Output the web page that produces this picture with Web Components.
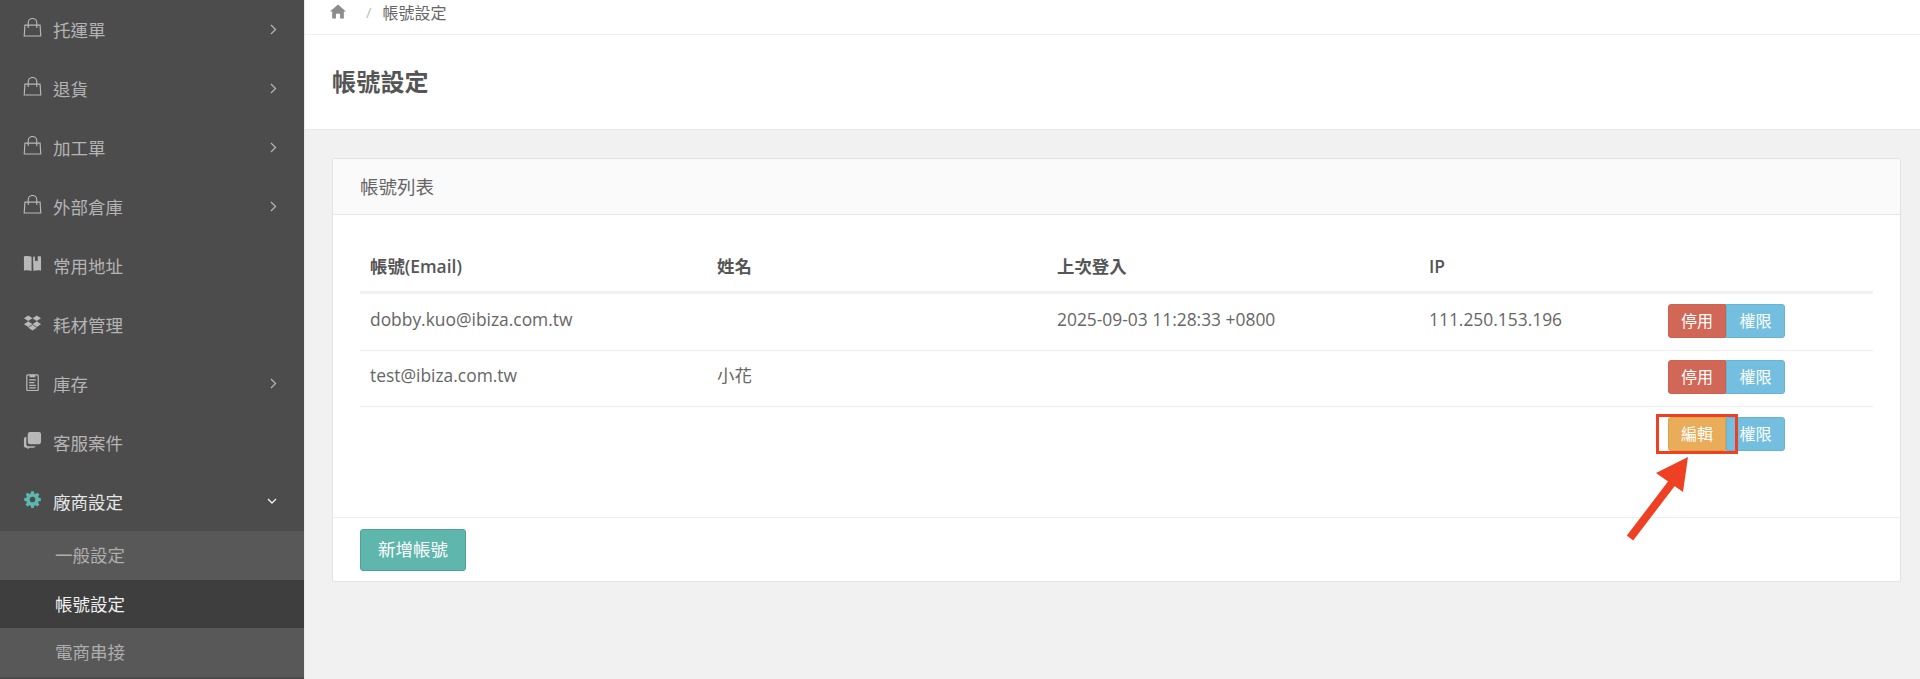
<!DOCTYPE html>
<html lang="zh-Hant"><head><meta charset="utf-8"><title>帳號設定</title>
<style>
html,body{margin:0;height:100%;overflow:hidden;background:#f1f1f1}
body{font:16px/1.4 "Open Sans","Noto Sans CJK TC",sans-serif;color:#555}
</style></head><body>
<app-shell>
  <side-nav slot="side">
    <nav-item icon="bag" arrow="right">托運單</nav-item>
    <nav-item icon="bag" arrow="right">退貨</nav-item>
    <nav-item icon="bag" arrow="right">加工單</nav-item>
    <nav-item icon="bag" arrow="right">外部倉庫</nav-item>
    <nav-item icon="book">常用地址</nav-item>
    <nav-item icon="dropbox">耗材管理</nav-item>
    <nav-item icon="clip" arrow="right">庫存</nav-item>
    <nav-item icon="chat">客服案件</nav-item>
    <nav-item icon="gear" arrow="down" open>廠商設定</nav-item>
    <sub-item>一般設定</sub-item>
    <sub-item active>帳號設定</sub-item>
    <sub-item>電商串接</sub-item>
  </side-nav>
  <bread-crumb>帳號設定</bread-crumb>
  <page-head>帳號設定</page-head>
  <account-card title-text="帳號列表">
    <account-table></account-table>
    <x-btn slot="footer" kind="add">新增帳號</x-btn>
  </account-card>
</app-shell>
<script>
const ICONS={
bag:'<path d="M2 7.500h16l.7 11.500H1.300z" fill="none" stroke="currentColor" stroke-width="1.200"/><path d="M5.500 10.500V5a4.500 4.500 0 0 1 9 0v5.500" fill="none" stroke="currentColor" stroke-width="1.200"/>',
book:'<path d="M1 2.500c2.500-.5 5.500-.5 8 .5v15c-2.500-1-5.500-1-8-.5zM10.500 3c.6-.2 1.300-.4 2-.5v5.500l1.500-1.200 1.500 1.200V2.300c1.200 0 2.300 0 3.500.2v15c-2.500-.5-5.500-.5-8 .5z" fill="currentColor"/>',
dropbox:'<path d="M5.500 2.500 10 5.500 5.500 8.500 1 5.500zM14.500 2.500 19 5.500 14.500 8.500 10 5.500zM5.500 8.800 10 11.800 5.500 14.800 1 11.800zM14.500 8.800 19 11.800 14.500 14.800 10 11.800zM5.500 15.600 10 12.700 14.500 15.600 10 18.500z" fill="currentColor"/>',
clip:'<path d="M5 3h10a1 1 0 0 1 1 1v14.500a1 1 0 0 1-1 1H5a1 1 0 0 1-1-1V4a1 1 0 0 1 1-1z M6.500 8.300h7M6.500 11.200h5.500M6.500 14h7M6.500 16.800h7" fill="none" stroke="currentColor" stroke-width="1.300"/><path d="M7 5.500V3h2a1.100 1.100 0 0 1 2 0h2v2.500z" fill="currentColor"/>',
chat:'<path d="M7.500 1h9.500a2.500 2.500 0 0 1 2 2v8a3 3 0 0 1-3 3H7.500A2.500 2.500 0 0 1 5 11.500v-8A2.500 2.500 0 0 1 7.500 1z" fill="currentColor"/><path d="M3.500 6v8.500a2 2 0 0 0 2 1.500h8l-2 1.500H7l-2.500 1.800.3-1.800H3a2 2 0 0 1-2-2V8.500A2.500 2.500 0 0 1 3.500 6z" fill="currentColor"/>',
gear:'<path transform="translate(1.300 1.300) scale(.87)" fill-rule="evenodd" d="M8.400 0h3.200l.5 2.600 1.700.7 2.200-1.500 2.300 2.300-1.500 2.200.7 1.700 2.600.5v3.200l-2.600.5-.7 1.700 1.500 2.200-2.300 2.300-2.200-1.500-1.700.7-.5 2.600H8.400l-.5-2.600-1.700-.7-2.200 1.500-2.300-2.300 1.500-2.200-.7-1.700L-.1 11.600V8.400l2.600-.5.7-1.700-1.500-2.200 2.300-2.300 2.200 1.500 1.700-.7zM10 6.600a3.400 3.400 0 1 0 0 6.800 3.400 3.400 0 0 0 0-6.800z" fill="currentColor"/>'
};
function def(name,css,html){
  customElements.define(name,class extends HTMLElement{
    connectedCallback(){
      if(this.shadowRoot)return;
      const r=this.attachShadow({mode:'open'});
      r.innerHTML='<style>'+css+'</style>'+html;
    }
  });
}
def('app-shell',`
:host{display:grid;grid-template-columns:304px 1fr;height:679px;overflow:hidden}
.side{grid-row:1;min-height:0}
.main{display:flex;flex-direction:column;min-width:0;border-left:1px solid #e8e8e8;background:#f1f1f1}
`,`<div class="side"><slot name="side"></slot></div><div class="main"><slot></slot></div>`);
def('side-nav',`:host{display:flex;flex-direction:column;height:679px;background:#4c4c4c;box-sizing:border-box;overflow:hidden}`,`<slot></slot>`);
customElements.define('nav-item',class extends HTMLElement{
  connectedCallback(){
    if(this.shadowRoot)return;
    const r=this.attachShadow({mode:'open'});
    const ic=this.getAttribute('icon'),ar=this.getAttribute('arrow'),open=this.hasAttribute('open');
    const arrow=ar==='right'?'<svg class="ar" width="7" height="11" viewBox="0 0 7 11"><path d="M1 1l4.500 4.500L1 10" fill="none" stroke="#b4b4b4" stroke-width="1.300"/></svg>':ar==='down'?'<svg class="ar" width="10" height="7" viewBox="0 0 10 7"><path d="M1 1l4 4 4-4" fill="none" stroke="#eee" stroke-width="1.400"/></svg>':'';
    r.innerHTML=`<style>
:host{display:flex;align-items:center;flex:none;height:59px;padding:0 27px 0 23px;box-sizing:border-box;color:${open?'#e6e6e6':'#b4b4b4'};font-size:17.500px}
svg.i{width:19px;height:19px;flex:none;margin-right:11px;margin-top:-4px;color:${ic==='gear'?'#5cb8ae':'#b8b8b8'}}
.t{flex:1;line-height:1;padding-top:2px}
</style><svg class="i" viewBox="0 0 20 20">${ICONS[ic]}</svg><span class="t"><slot></slot></span>${arrow}`;
  }
});
customElements.define('sub-item',class extends HTMLElement{
  connectedCallback(){
    if(this.shadowRoot)return;
    const r=this.attachShadow({mode:'open'});
    const a=this.hasAttribute('active');
    r.innerHTML=`<style>:host{display:flex;align-items:center;flex:none;height:48.500px;padding-left:55px;box-sizing:border-box;background:${a?'#3e3e3e':'#585858'};color:${a?'#f0f0f0':'#adadad'};font-size:17.500px}</style><slot></slot>`;
  }
});
def('bread-crumb',`
:host{display:flex;align-items:center;flex:none;background:#fff;border-bottom:1px solid #eee;padding:0 0 0 25px;height:34px;font-size:16px;color:#666;line-height:1}
svg{width:16px;height:16px;color:#8c8c8c;margin-top:-12px}
.sep{color:#bbb;margin:-10px 11px 0 20px;font-size:15px}
span.t{margin-top:-8px}
`,`<svg viewBox="0 0 17 16"><path d="M8.500 1 17 8.500h-2.300V16h-4v-5H6.300v5h-4V8.500H0z" fill="currentColor"/></svg><span class="sep">/</span><span class="t"><slot></slot></span>`);
def('page-head',`
:host{display:flex;align-items:center;flex:none;height:94px;background:#fff;border-bottom:1px solid #e9e9e9;padding-left:27px;font-size:24px;font-weight:700;color:#555;letter-spacing:.2px}
`,`<slot></slot>`);
customElements.define('account-card',class extends HTMLElement{
  connectedCallback(){
    if(this.shadowRoot)return;
    const r=this.attachShadow({mode:'open'});
    r.innerHTML=`<style>
:host{display:block;margin:28px 19px 0 27px;background:#fff;border:1px solid #e3e3e3;border-radius:2px;position:relative}
.h{height:55px;display:flex;align-items:center;background:#fafafa;border-bottom:1px solid #e6e6e6;padding-left:27px;font-size:18.500px;color:#666}
.b{height:303px;padding:26px 27px 0;box-sizing:border-box;border-bottom:1px solid #eee}
.f{height:63px;padding:11px 27px 0;box-sizing:border-box}
</style><div class="h">${this.getAttribute('title-text')}</div><div class="b"><slot></slot></div><div class="f"><slot name="footer"></slot></div>`;
  }
});
customElements.define('x-btn',class extends HTMLElement{
  connectedCallback(){
    if(this.shadowRoot)return;
    const r=this.attachShadow({mode:'open'});
    const kind=this.getAttribute('kind');
    const c={red:['#d16756','#cc6250'],blue:['#74bfe0','#67b3d4'],orange:['#e9ac58','#dfa04a'],add:['#5fb6ad','#52a197']}[kind];
    const add=kind==='add';
    r.innerHTML=`<style>:host{display:inline-flex;align-items:center;justify-content:center;box-sizing:border-box;background:${c[0]};border:1px solid ${c[1]};color:#fff;border-radius:${add?3:0}px;height:${add?42:34}px;width:${add?106:59}px;font-size:${add?17.5:16}px;line-height:1}
:host([first]){border-radius:3px 0 0 3px;width:58px}:host([last]){border-radius:0 3px 3px 0}</style><slot></slot>`;
  }
});
customElements.define('account-table',class extends HTMLElement{
  connectedCallback(){
    if(this.shadowRoot)return;
    const r=this.attachShadow({mode:'open'});
    const rows=[['dobby.kuo@ibiza.com.tw','','2025-09-03 11:28:33 +0800','111.250.153.196','停用','red'],['test@ibiza.com.tw','小花','','','停用','red'],['','','','','編輯','orange']];
    r.innerHTML=`<style>
:host{display:block;font-size:17.400px;color:#666}
.r{display:grid;grid-template-columns:347px 340px 372px 239px 1fr;align-items:center;height:56.500px;border-bottom:1px solid #eee;padding:0 0 2px 10px;box-sizing:border-box}
.r:last-child{border-bottom:0}
.r>.c{margin-bottom:4px}
.hd{height:53px;border-bottom:3px solid #f0f0f0;font-weight:600;color:#555;font-size:17.400px;padding-bottom:0}
.hd>div{margin:0}
.act{display:flex}
</style>
<div class="r hd"><div>帳號(Email)</div><div>姓名</div><div>上次登入</div><div>IP</div><div></div></div>
${rows.map(x=>`<div class="r"><div class="c">${x[0]}</div><div class="c">${x[1]}</div><div class="c">${x[2]}</div><div class="c">${x[3]}</div><div class="act"><x-btn kind="${x[5]}" first>${x[4]}</x-btn><x-btn kind="blue" last>權限</x-btn></div></div>`).join('')}`;
  }
});
def('arrow-note',`
:host{position:absolute;left:1620px;top:405px;width:110px;height:140px;display:block;pointer-events:none}
.box{position:absolute;left:36px;top:9px;width:82px;height:40px;box-sizing:border-box;border:3.500px solid #ee4124}
svg{position:absolute;left:0;top:0}
`,`<svg width="125" height="140" viewBox="0 0 125 140"><path d="M10 133 55 74" stroke="#ee4124" stroke-width="8" fill="none"/><path d="M68 52 36 68 63 87z" fill="#ee4124"/></svg><div class="box"></div>`);
document.body.appendChild(document.createElement('arrow-note'));
</script>
</body></html>
